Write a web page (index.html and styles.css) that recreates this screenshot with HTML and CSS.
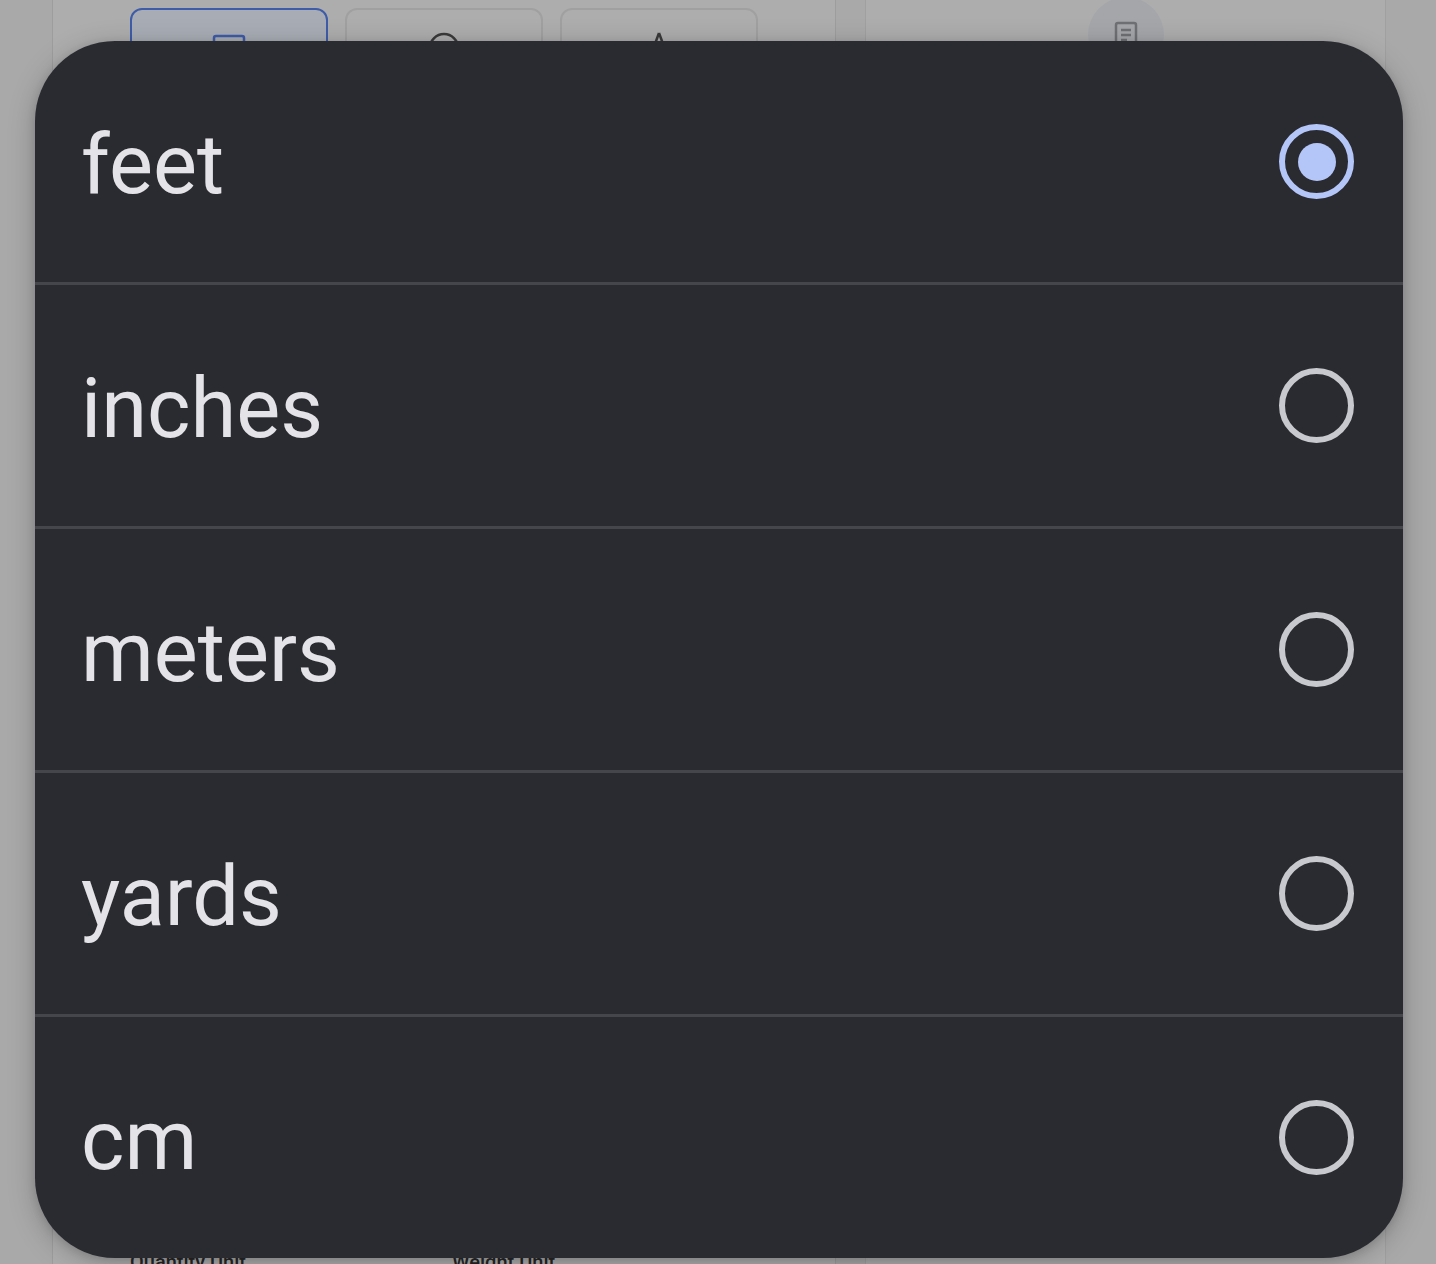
FILE: index.html
```html
<!DOCTYPE html>
<html lang="en">
<head>
<meta charset="utf-8">
<title>Unit picker</title>
<link rel="stylesheet" href="styles.css">
</head>
<body>
<div class="page">
  <div class="gutter"></div>
  <div class="panel-left">
    <div class="shape-row">
      <div class="shape-btn selected">
        <svg width="34" height="20" viewBox="0 0 34 20"><rect x="2" y="4" width="30" height="14" rx="2" fill="none" stroke="#3e5ca8" stroke-width="2.5"/></svg>
      </div>
      <div class="shape-btn">
        <svg width="34" height="20" viewBox="0 0 34 20"><circle cx="17" cy="16" r="14" fill="none" stroke="#3a3a3a" stroke-width="2.5"/></svg>
      </div>
      <div class="shape-btn">
        <svg width="34" height="20" viewBox="0 0 34 20"><path d="M17 1 L10 20 M17 1 L24 20" fill="none" stroke="#3a3a3a" stroke-width="2.5"/></svg>
      </div>
    </div>
    <div class="label-row">
      <span class="bg-label">Quantity Unit</span>
      <span class="bg-label">Weight Unit</span>
    </div>
  </div>
  <div class="panel-right">
    <div class="round-btn">
      <svg width="24" height="28" viewBox="0 0 24 28"><rect x="2" y="2" width="20" height="26" rx="2" fill="none" stroke="#6f7074" stroke-width="2.5"/><path d="M7 9h10M7 14h10M7 19h6" stroke="#6f7074" stroke-width="2.5"/></svg>
    </div>
  </div>
</div>

<div class="dialog">
  <div class="option">
    <span class="option-label">feet</span>
    <span class="radio checked"></span>
  </div>
  <div class="option">
    <span class="option-label">inches</span>
    <span class="radio"></span>
  </div>
  <div class="option">
    <span class="option-label">meters</span>
    <span class="radio"></span>
  </div>
  <div class="option">
    <span class="option-label">yards</span>
    <span class="radio"></span>
  </div>
  <div class="option">
    <span class="option-label">cm</span>
    <span class="radio"></span>
  </div>
</div>
</body>
</html>
```

FILE: styles.css
```css
html, body {
  margin: 0;
  padding: 0;
  height: 100%;
}
body {
  background: #a9a9a9;
  font-family: Roboto, "Liberation Sans", sans-serif;
  overflow: hidden;
}
.page {
  display: flex;
  height: 1264px;
}
.gutter {
  width: 52px;
  flex: none;
}
.panel-left {
  width: 782px;
  flex: none;
  border-left: 1px solid #9d9d9d;
  border-right: 1px solid #9d9d9d;
  background: #adadad;
  display: flex;
  flex-direction: column;
}
.shape-row {
  display: flex;
  gap: 17px;
  padding: 8px 0 0 77px;
}
.shape-btn {
  width: 198px;
  height: 120px;
  border: 2px solid #a0a0a0;
  border-radius: 12px;
  display: flex;
  justify-content: center;
  align-items: flex-start;
  padding-top: 22px;
  box-sizing: border-box;
}
.shape-btn.selected {
  border: 2.5px solid #3e5ca8;
  background: #a8adb5;
}
.label-row {
  margin-top: auto;
  display: flex;
  padding-left: 77px;
  margin-bottom: -12px;
}
.bg-label {
  width: 322px;
  font-size: 20px;
  font-weight: 500;
  color: #262626;
  line-height: 28px;
}
.panel-right {
  margin-left: 29px;
  width: 519px;
  flex: none;
  border-left: 1px solid #a0a0a0;
  border-right: 1px solid #a0a0a0;
  background: #adadad;
  display: flex;
  justify-content: center;
}
.round-btn {
  width: 76px;
  height: 76px;
  border-radius: 50%;
  background: #a4a6aa;
  margin-top: -3px;
  display: flex;
  justify-content: center;
  padding-top: 24px;
  box-sizing: border-box;
}

.dialog {
  position: absolute;
  left: 35px;
  top: 41px;
  width: 1368px;
  height: 1217px;
  background: #2a2b30;
  border-radius: 80px;
  overflow: hidden;
  box-shadow: 0 6px 28px rgba(0,0,0,0.22), 0 2px 8px rgba(0,0,0,0.12);
  display: flex;
  flex-direction: column;
}
.option {
  height: 244px;
  flex: none;
  display: flex;
  align-items: center;
  justify-content: space-between;
  padding: 7px 49px 0 46px;
  box-sizing: border-box;
  border-bottom: 3px solid #44464b;
}
.option:last-child {
  border-bottom: none;
  height: 241px;
}
.option-label {
  font-size: 83px;
  color: #e3e3e8;
  line-height: 96px;
}
.radio {
  width: 75px;
  height: 75px;
  border-radius: 50%;
  border: 6px solid #c8c9cf;
  box-sizing: border-box;
  margin-top: -7px;
  display: flex;
  align-items: center;
  justify-content: center;
}
.radio.checked {
  border-color: #b4c5f8;
}
.radio.checked::after {
  content: "";
  width: 38px;
  height: 38px;
  border-radius: 50%;
  background: #b4c5f8;
}
```
